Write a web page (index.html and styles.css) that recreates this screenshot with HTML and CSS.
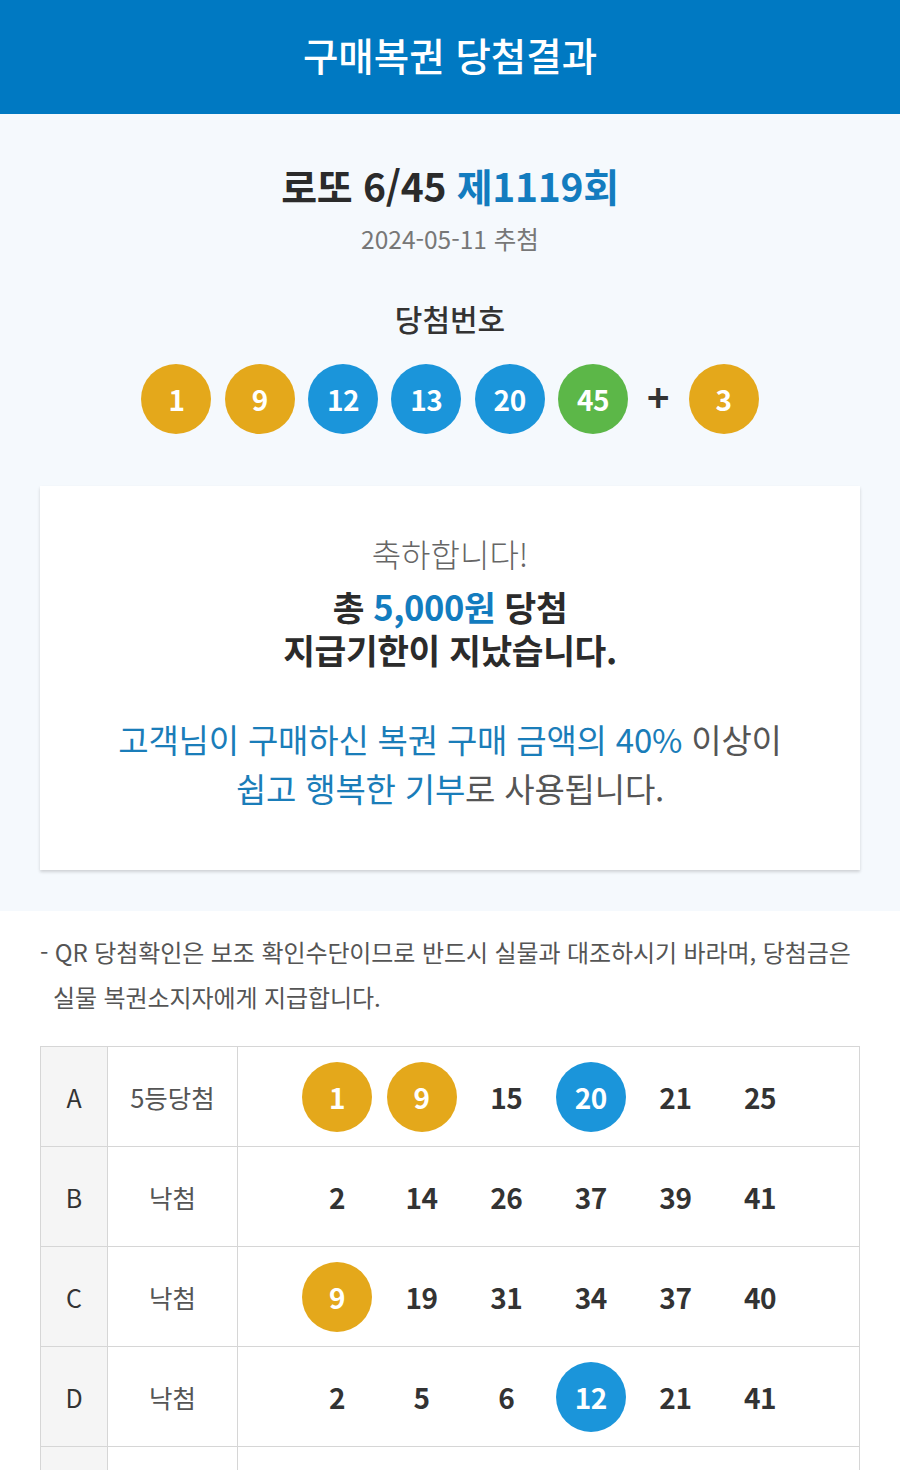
FILE: index.html
```html
<!DOCTYPE html>
<html lang="ko">
<head>
<meta charset="utf-8">
<title>구매복권 당첨결과</title>
<link rel="stylesheet" href="styles.css">
</head>
<body>
<header class="topbar"><h1 class="topbar-title">구매복권 당첨결과</h1></header>

<section class="summary">
  <h2 class="round">로또 6/45 <span class="round-no">제1119회</span></h2>
  <p class="draw-date">2024-05-11 추첨</p>
  <h3 class="win-label">당첨번호</h3>
  <div class="win-balls">
    <span class="ball yellow">1</span>
    <span class="ball yellow">9</span>
    <span class="ball blue">12</span>
    <span class="ball blue">13</span>
    <span class="ball blue">20</span>
    <span class="ball green">45</span>
    <span class="plus">+</span>
    <span class="ball yellow">3</span>
  </div>

  <div class="card">
    <p class="congrats">축하합니다!</p>
    <p class="prize">총 <span class="prize-amt">5,000원</span> 당첨</p>
    <p class="prize">지급기한이 지났습니다.</p>
    <p class="donate first"><span class="hl">고객님이 구매하신 복권 구매 금액의 40%</span> 이상이</p>
    <p class="donate"><span class="hl">쉽고 행복한 기부</span>로 사용됩니다.</p>
  </div>
</section>

<section class="detail">
  <p class="notice">- QR 당첨확인은 보조 확인수단이므로 반드시 실물과 대조하시기 바라며, 당첨금은<br>실물 복권소지자에게 지급합니다.</p>

  <table class="tickets">
    <tr>
      <td class="c-slot">A</td>
      <td class="c-res">5등당첨</td>
      <td class="c-nums"><div class="nums"><span class="num ball yellow">1</span><span class="num ball yellow">9</span><span class="num">15</span><span class="num ball blue">20</span><span class="num">21</span><span class="num">25</span></div></td>
    </tr>
    <tr>
      <td class="c-slot">B</td>
      <td class="c-res">낙첨</td>
      <td class="c-nums"><div class="nums"><span class="num">2</span><span class="num">14</span><span class="num">26</span><span class="num">37</span><span class="num">39</span><span class="num">41</span></div></td>
    </tr>
    <tr>
      <td class="c-slot">C</td>
      <td class="c-res">낙첨</td>
      <td class="c-nums"><div class="nums"><span class="num ball yellow">9</span><span class="num">19</span><span class="num">31</span><span class="num">34</span><span class="num">37</span><span class="num">40</span></div></td>
    </tr>
    <tr>
      <td class="c-slot">D</td>
      <td class="c-res">낙첨</td>
      <td class="c-nums"><div class="nums"><span class="num">2</span><span class="num">5</span><span class="num">6</span><span class="num ball blue">12</span><span class="num">21</span><span class="num">41</span></div></td>
    </tr>
    <tr class="last-row">
      <td class="c-slot"></td>
      <td class="c-res"></td>
      <td class="c-nums"></td>
    </tr>
  </table>
</section>
</body>
</html>
```
FILE: styles.css
```css
* { box-sizing: border-box; }
html, body { margin: 0; padding: 0; }
body {
  font-family: "Noto Sans CJK KR", "Noto Sans", sans-serif;
  color: #333;
  background: #fff;
}
p, h1, h2, h3 { margin: 0; }

.topbar {
  height: 114px;
  background: #0079c2;
  display: flex;
  align-items: center;
  justify-content: center;
}
.topbar-title {
  color: #fff;
  font-size: 38.5px;
  font-weight: 500;
  line-height: 44px;
  letter-spacing: 0;
  padding-bottom: 6px;
}

.summary {
  background: #f5f9fd;
  padding: 47px 40px 41px;
  text-align: center;
}
.round {
  font-size: 39px;
  font-weight: 700;
  line-height: 48px;
  letter-spacing: -0.3px;
  color: #2b2b2b;
}
.round-no { color: #137cbf; }
.draw-date {
  margin-top: 15px;
  font-size: 24.5px;
  line-height: 30px;
  color: #777;
}
.win-label {
  margin-top: 46px;
  font-size: 30px;
  font-weight: 500;
  line-height: 36px;
  color: #333;
}
.win-balls {
  margin-top: 28px;
  display: flex;
  justify-content: center;
  align-items: center;
  gap: 13.3px;
}
.ball {
  width: 70px;
  height: 70px;
  border-radius: 50%;
  display: inline-flex;
  align-items: center;
  justify-content: center;
  color: #fff;
  font-size: 28px;
  font-weight: 700;
  letter-spacing: -0.5px;
}
.yellow { background: #e4a81b; }
.blue { background: #1b95da; }
.green { background: #5cb748; }
.plus {
  width: 34px;
  text-align: center;
  font-size: 38px;
  font-weight: 700;
  line-height: 40px;
  color: #333;
  margin-top: -6px;
}

.card {
  margin-top: 52px;
  background: #fff;
  box-shadow: 0 2px 3px rgba(0, 0, 0, 0.16);
  padding: 47px 10px 57px;
}
.congrats {
  font-size: 32px;
  line-height: 40px;
  color: #666;
  font-weight: 300;
  margin-bottom: 12px;
}
.prize {
  font-size: 34.5px;
  font-weight: 700;
  line-height: 43px;
  color: #2b2b2b;
  letter-spacing: -0.4px;
}
.prize-amt { color: #137cbf; }
.donate {
  font-size: 33px;
  line-height: 49px;
  color: #555;
  letter-spacing: -0.2px;
}
.donate.first { margin-top: 44px; }
.hl { color: #1a7db9; }

.detail {
  padding: 18px 40px 0;
}
.notice {
  font-size: 24px;
  line-height: 45px;
  color: #555;
  padding-left: 13px;
  text-indent: -13px;
  letter-spacing: -0.1px;
  white-space: nowrap;
}
.tickets {
  margin-top: 27px;
  width: 100%;
  border-collapse: collapse;
}
.tickets td {
  border: 1px solid #d6d6d6;
  height: 100px;
  padding: 0;
  text-align: center;
  vertical-align: middle;
}
.c-slot {
  width: 67px;
  background: #f5f5f5;
  font-size: 25px;
  color: #333;
}
.c-res {
  width: 130px;
  font-size: 25.5px;
  color: #555;
}
.nums {
  display: flex;
  justify-content: center;
  align-items: center;
  gap: 14.6px;
}
.num {
  width: 70px;
  height: 70px;
  display: inline-flex;
  align-items: center;
  justify-content: center;
  font-size: 28px;
  font-weight: 700;
  color: #333;
  letter-spacing: -0.5px;
}
.num.ball { color: #fff; }
```
